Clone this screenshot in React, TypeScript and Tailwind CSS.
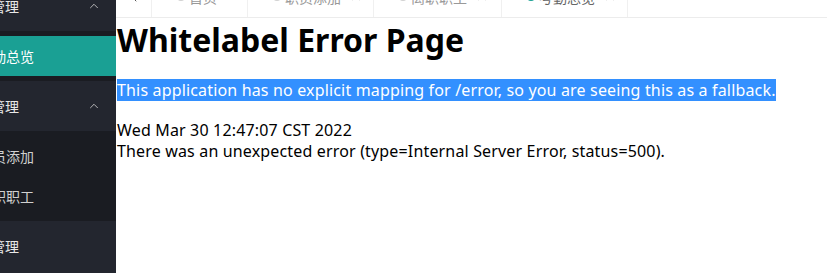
import { ChevronUp, ChevronLeft, X } from 'lucide-react';

const cjk = '"Noto Sans CJK SC", "Noto Sans", sans-serif';

type SubItem = { label: string; active?: boolean };
type Group = { title: string; items: SubItem[]; open: boolean };

const groups: Group[] = [
  { title: '考勤管理', open: true, items: [{ label: '考勤总览', active: true }] },
  { title: '员工管理', open: true, items: [{ label: '职员添加' }, { label: '离职职工' }] },
  { title: '系统管理', open: false, items: [] },
];

const tabs = [
  { label: '首页', closable: false, active: false, width: 'w-[96px]' },
  { label: '职员添加', closable: true, active: false, width: 'w-[126px]' },
  { label: '离职职工', closable: true, active: false, width: 'w-[128px]' },
  { label: '考勤总览', closable: true, active: true, width: 'w-[126px]' },
];

function Sidebar() {
  return (
    <aside className="w-[116px] h-[273px] shrink-0 overflow-hidden bg-[#23262f]" style={{ fontFamily: cjk }}>
      <div className="w-[173px] -ml-[57px] -mt-[19px]">
        {groups.map((g) => (
          <div key={g.title}>
            <div className="h-[50px] flex items-center justify-between pl-5 pr-[15px] text-[14px] text-[#e8e8e8]">
              <span>{g.title}</span>
              {g.open && <ChevronUp size={14} strokeWidth={1.5} className="text-[#c8c8c8]" />}
            </div>
            {g.items.length > 0 && (
              <div className="bg-[#1a1c22] py-[5px]">
                {g.items.map((it) => (
                  <div
                    key={it.label}
                    className={`h-[40px] flex items-center pl-[35px] text-[14px] ${
                      it.active ? 'bg-[#1aa094] text-white' : 'text-[#d0d0d0]'
                    }`}
                  >
                    {it.label}
                  </div>
                ))}
              </div>
            )}
          </div>
        ))}
      </div>
    </aside>
  );
}

function TabBar() {
  return (
    <div className="h-[18px] overflow-hidden border-b border-[#ececec]" style={{ fontFamily: cjk }}>
      <div className="h-[40px] -mt-[23px] flex items-stretch">
        <div className="w-[36px] flex items-center justify-center border-r border-[#f0f0f0] text-[#555]">
          <ChevronLeft size={16} strokeWidth={1.5} />
        </div>
        {tabs.map((t) => (
          <div
            key={t.label}
            className={`${t.width} flex items-center pl-[25px] border-r border-[#f0f0f0] text-[14px] ${
              t.active ? 'text-[#666]' : 'text-[#999]'
            }`}
          >
            <span className={`w-[8px] h-[8px] rounded-full mr-[4px] ${t.active ? 'bg-[#1aa094]' : 'bg-[#d2d2d2]'}`} />
            <span>{t.label}</span>
            {t.closable && <X size={12} strokeWidth={1.5} className="ml-[9px] text-[#aaa]" />}
          </div>
        ))}
      </div>
    </div>
  );
}

export default function App() {
  return (
    <div className="w-[827px] h-[273px] flex overflow-hidden bg-white">
      <Sidebar />
      <main className="flex-1 flex flex-col min-w-0">
        <TabBar />
        <div className="pl-[1px] text-black" style={{ fontFamily: '"Noto Sans", "Noto Sans CJK SC", sans-serif' }}>
          <h1 className="text-[32px] font-bold leading-[38px] mt-[3px]">Whitelabel Error Page</h1>
          <div className="text-[16px] tracking-[0.16px]">
            <p className="mt-[21px] leading-[20px]">
              <span className="bg-[#3390ff] text-white">
                This application has no explicit mapping for /error, so you are seeing this as a fallback.
              </span>
            </p>
            <div className="mt-[20px] leading-[21px]">Wed Mar 30 12:47:07 CST 2022</div>
            <div className="leading-[21px]">
              There was an unexpected error (type=Internal Server Error, status=500).
            </div>
          </div>
        </div>
      </main>
    </div>
  );
}
